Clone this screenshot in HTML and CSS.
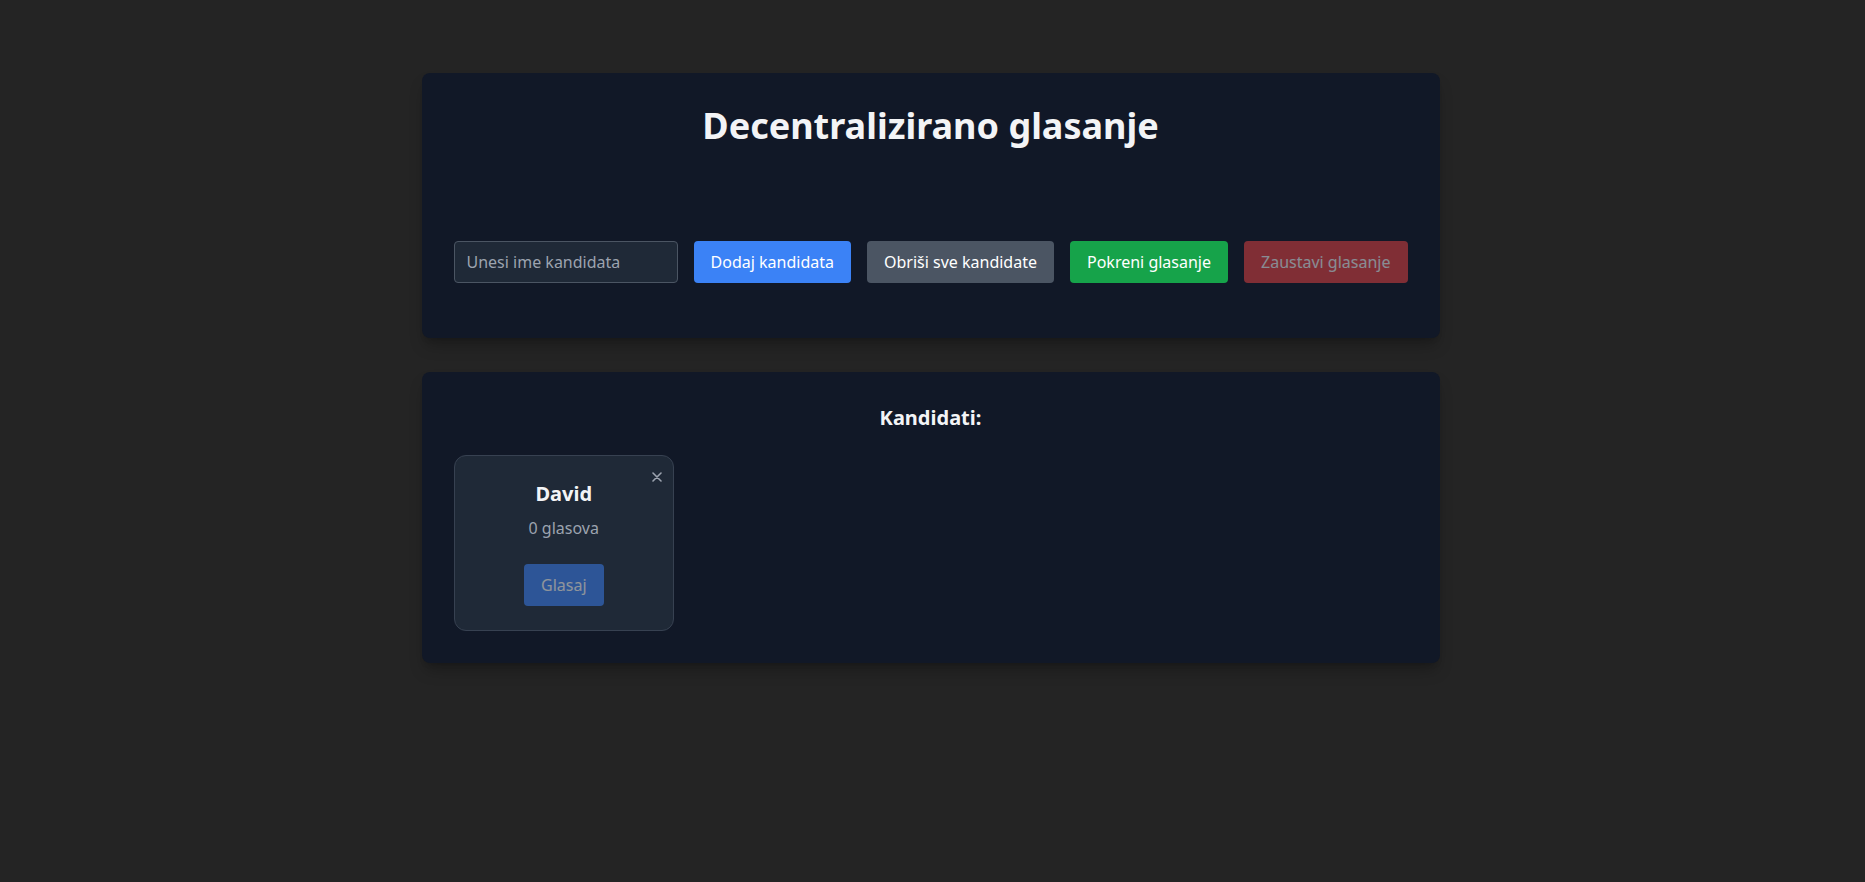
FILE: index.html
```html
<!DOCTYPE html>
<html lang="hr">
<head>
<meta charset="utf-8">
<title>Decentralizirano glasanje</title>
<link rel="stylesheet" href="styles.css">
</head>
<body>
<main class="page">
  <section class="panel panel-top">
    <h1 class="title">Decentralizirano glasanje</h1>
    <div class="controls">
      <input class="input" type="text" placeholder="Unesi ime kandidata">
      <button class="btn btn-blue">Dodaj kandidata</button>
      <button class="btn btn-gray">Obriši sve kandidate</button>
      <button class="btn btn-green">Pokreni glasanje</button>
      <button class="btn btn-red is-disabled">Zaustavi glasanje</button>
    </div>
  </section>
  <section class="panel panel-list">
    <h2 class="subtitle">Kandidati:</h2>
    <div class="grid">
      <div class="card">
        <button class="close" aria-label="Ukloni">
          <svg width="10" height="10" viewBox="0 0 10 10"><path d="M1 1 L9 9 M9 1 L1 9" stroke="#9ca3af" stroke-width="1.6" stroke-linecap="round"/></svg>
        </button>
        <h3 class="name">David</h3>
        <p class="votes">0 glasova</p>
        <button class="btn btn-blue is-disabled vote">Glasaj</button>
      </div>
    </div>
  </section>
</main>
</body>
</html>
```

FILE: styles.css
```css
* { box-sizing: border-box; }
html, body { margin: 0; padding: 0; }
body {
  background: #242424;
  font-family: "Noto Sans", "Open Sans", sans-serif;
  color: #f3f4f6;
  min-height: 100vh;
}
.page {
  width: 1018px;
  margin: 0 auto;
  padding-top: 73px;
  display: flex;
  flex-direction: column;
  gap: 34px;
  position: relative;
  left: -2px;
}
.panel {
  background: #111827;
  border-radius: 8px;
  padding: 32px;
  box-shadow: 0 10px 15px -3px rgba(0,0,0,0.25), 0 4px 6px -4px rgba(0,0,0,0.2);
}
.title {
  margin: 1px 0 95px;
  font-size: 36px;
  line-height: 40px;
  font-weight: 700;
  text-align: center;
  color: #f3f4f6;
}
.controls {
  display: flex;
  gap: 16px;
  margin-bottom: 23px;
}
.input {
  flex: 1;
  min-width: 0;
  height: 42px;
  background: #1f2937;
  border: 1px solid #4b5563;
  border-radius: 4px;
  padding: 0 12px;
  font-family: inherit;
  font-size: 16px;
  color: #f3f4f6;
  outline: none;
}
.input::placeholder { color: #9ca3af; }
.btn {
  height: 42px;
  padding: 0 17px;
  border: none;
  border-radius: 4px;
  font-family: inherit;
  font-size: 16px;
  line-height: 24px;
  color: #ffffff;
  cursor: pointer;
  white-space: nowrap;
}
.btn-blue { background: #3b82f6; }
.btn-gray { background: #4b5563; }
.btn-green { background: #16a34a; }
.btn-red { background: #ef4444; }
.is-disabled { opacity: 0.5; cursor: not-allowed; }
.subtitle {
  margin: 0 0 23px;
  font-size: 20px;
  line-height: 28px;
  font-weight: 700;
  text-align: center;
  color: #f3f4f6;
}
.grid {
  display: grid;
  grid-template-columns: repeat(4, 1fr);
  gap: 24px;
}
.card {
  position: relative;
  background: #1f2937;
  border: 1px solid #374151;
  border-radius: 12px;
  padding: 24px;
  display: flex;
  flex-direction: column;
  align-items: center;
}
.close {
  position: absolute;
  top: 13px;
  right: 8px;
  width: 16px;
  height: 16px;
  padding: 0;
  border: none;
  background: transparent;
  display: flex;
  align-items: center;
  justify-content: center;
  cursor: pointer;
}
.name {
  margin: 0 0 8px;
  font-size: 20px;
  line-height: 28px;
  font-weight: 700;
  color: #f3f4f6;
}
.votes {
  margin: 0;
  font-size: 16px;
  line-height: 24px;
  color: #9ca3af;
}
.vote { margin-top: 24px; }
```
